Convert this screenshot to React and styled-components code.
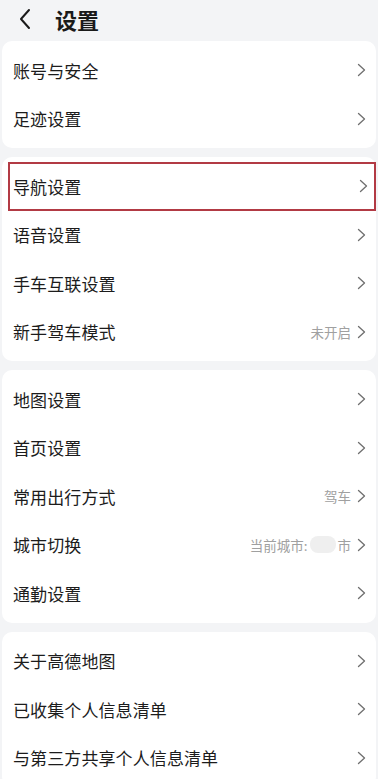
import React from 'react';
import styled, { createGlobalStyle } from 'styled-components';

const GlobalStyle = createGlobalStyle`
	html, body {
		margin: 0;
		padding: 0;
		background: #f3f4f6;
		font-family: "Noto Sans CJK SC", "Noto Sans", sans-serif;
	}
`;

const Page = styled.div`
	width: 378px;
	min-height: 779px;
	background: #f3f4f6;
	overflow: hidden;
`;

const Header = styled.div`
	display: flex;
	align-items: center;
	height: 41px;
	padding-left: 17px;
	gap: 20px;
	box-sizing: border-box;
`;

const BackIcon = styled.svg`
	width: 18px;
	height: 22px;
	margin-top: -4px;
`;

const Title = styled.div`
	font-size: 22px;
	font-weight: 700;
	color: #1a1a1a;
	margin-top: -4px;
`;

const Groups = styled.div`
	display: flex;
	flex-direction: column;
	gap: 9px;
	padding: 0 2px;
`;

const Card = styled.div`
	background: #ffffff;
	border-radius: 10px;
	padding: 5px 0;
`;

const Row = styled.div`
	display: flex;
	align-items: center;
	height: 48.5px;
	box-sizing: border-box;
	border: 2px solid ${(p) => (p.$active ? '#b23a44' : 'transparent')};
	margin-left: ${(p) => (p.$active ? '6px' : '0')};
	padding-left: ${(p) => (p.$active ? '3px' : '9px')};
	padding-right: ${(p) => (p.$active ? '6px' : '8px')};
`;

const Label = styled.div`
	flex: 1;
	font-size: 17px;
	color: #1c1c1c;
	letter-spacing: 0.1px;
`;

const Value = styled.div`
	font-size: 13.5px;
	color: #a0a0a0;
	margin-right: 6px;
	display: flex;
	align-items: center;
`;

const Blur = styled.span`
	display: inline-block;
	width: 26px;
	height: 17px;
	border-radius: 8px;
	background: #efefef;
	margin: 0 2px;
`;

const Chevron = styled.svg`
	width: 9px;
	height: 14px;
	flex-shrink: 0;
`;

const groups = [
	[{ label: '账号与安全' }, { label: '足迹设置' }],
	[
		{ label: '导航设置', active: true },
		{ label: '语音设置' },
		{ label: '手车互联设置' },
		{ label: '新手驾车模式', value: '未开启' },
	],
	[
		{ label: '地图设置' },
		{ label: '首页设置' },
		{ label: '常用出行方式', value: '驾车' },
		{ label: '城市切换', city: true },
		{ label: '通勤设置' },
	],
	[
		{ label: '关于高德地图' },
		{ label: '已收集个人信息清单' },
		{ label: '与第三方共享个人信息清单' },
	],
];

function Arrow() {
	return (
		<Chevron viewBox="0 0 9 14">
			<path d="M1.5 1.5 L7.5 7 L1.5 12.5" fill="none" stroke="#6f6f6f" strokeWidth="1.3" strokeLinecap="round" strokeLinejoin="round" />
		</Chevron>
	);
}

function App() {
	return (
		<Page>
			<GlobalStyle />
			<Header>
				<BackIcon viewBox="0 0 18 22">
					<path d="M12 2 L4 11 L12 20" fill="none" stroke="#1a1a1a" strokeWidth="2" strokeLinecap="round" strokeLinejoin="round" />
				</BackIcon>
				<Title>设置</Title>
			</Header>
			<Groups>
				{groups.map((items, i) => (
					<Card key={i}>
						{items.map((item) => (
							<Row key={item.label} $active={item.active}>
								<Label>{item.label}</Label>
								{item.value && <Value>{item.value}</Value>}
								{item.city && (
									<Value>
										当前城市:<Blur />市
									</Value>
								)}
								<Arrow />
							</Row>
						))}
					</Card>
				))}
			</Groups>
		</Page>
	);
}

export default App;
